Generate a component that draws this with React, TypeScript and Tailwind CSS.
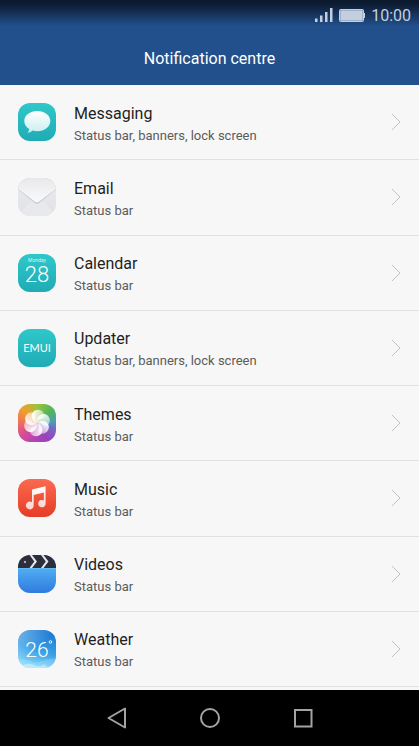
import type { ReactNode } from "react";

const tile = "block size-[38px] shrink-0";

function MessagingIcon() {
  return (
    <svg viewBox="0 0 38 38" className={tile} aria-hidden="true">
      <defs>
        <linearGradient id="msg-bg" x1="0" y1="0" x2="0" y2="1">
          <stop offset="0" stopColor="#2fc8ca" />
          <stop offset="1" stopColor="#1fabb5" />
        </linearGradient>
        <linearGradient id="msg-bubble" x1="0" y1="0" x2="0" y2="1">
          <stop offset="0" stopColor="#ffffff" />
          <stop offset="1" stopColor="#c9eef0" />
        </linearGradient>
      </defs>
      <rect width="38" height="38" rx="12" fill="url(#msg-bg)" />
      <path
        d="M19.300 8c7.400 0 13 4.400 13 10s-5.600 10.200-13 10.200c-1.700 0-3.200-.2-4.600-.6-1.300 1.200-3 2.100-5.200 2.200 1-1.200 1.600-2.400 1.700-3.800C8.100 24.200 6.300 21.300 6.300 18c0-5.600 5.600-10 13-10z"
        fill="url(#msg-bubble)"
      />
    </svg>
  );
}

function EmailIcon() {
  return (
    <svg viewBox="0 0 38 38" className={tile} aria-hidden="true">
      <defs>
        <linearGradient id="mail-flap" x1="0" y1="0" x2="0" y2="1">
          <stop offset="0" stopColor="#e8e8ea" />
          <stop offset="1" stopColor="#fafafc" />
        </linearGradient>
        <linearGradient id="mail-body" x1="0" y1="0" x2="0" y2="1">
          <stop offset="0" stopColor="#ececee" />
          <stop offset="1" stopColor="#e0e1e5" />
        </linearGradient>
        <clipPath id="mail-clip">
          <rect width="38" height="38" rx="12" />
        </clipPath>
      </defs>
      <g clipPath="url(#mail-clip)">
        <rect width="38" height="38" fill="url(#mail-body)" />
        <path d="M0 37L15 21h8l15 16v1H0z" fill="#e8e9ec" />
        <path d="M0 11.500l17 13.600q2 1.200 4 0L38 11.500V0H0z" fill="#c4c5ca" />
        <path d="M0 11l17 12.800q2 1.400 4 0L38 11V0H0z" fill="url(#mail-flap)" />
      </g>
    </svg>
  );
}

function CalendarIcon() {
  return (
    <svg viewBox="0 0 38 38" className={tile} aria-hidden="true">
      <rect width="38" height="38" rx="12" fill="url(#msg-bg)" />
      <text x="19" y="8" textAnchor="middle" fill="#d8f4f4" className="text-[5px]">
        Monday
      </text>
      <text x="19" y="28" textAnchor="middle" fill="#ffffff" className="text-[22px] font-light">
        28
      </text>
    </svg>
  );
}

function UpdaterIcon() {
  return (
    <svg viewBox="0 0 38 38" className={tile} aria-hidden="true">
      <rect width="38" height="38" rx="12" fill="url(#msg-bg)" />
      <text x="19" y="23" textAnchor="middle" fill="#ffffff" className="font-['Lato',sans-serif] text-[11px]">
        EMUI
      </text>
    </svg>
  );
}

function ThemesIcon() {
  return (
    <div className="size-[38px] shrink-0 rounded-[12px] bg-[conic-gradient(from_0deg,#9cc23c,#52b45c_50deg,#4a9fb4_85deg,#7668c4_110deg,#9a42bc_145deg,#b443b4_190deg,#d94f90_235deg,#ee7458_275deg,#efa02c_315deg,#9cc23c)]">
      <svg viewBox="0 0 38 38" className={tile} aria-hidden="true">
        <defs>
          <linearGradient id="petal" x1="0" y1="0" x2="1" y2="0">
            <stop offset="0" stopColor="#ffffff" stopOpacity="0.950" />
            <stop offset="1" stopColor="#ffffff" stopOpacity="0.450" />
          </linearGradient>
        </defs>
        {[10, 70, 130, 190, 250, 310].map((angle) => (
          <path
            key={angle}
            d="M19 19C13.500 18 10.800 12.500 13.200 8.800c2.200-3.600 7.600-4.200 10.400-1C26 10.800 24.500 14 21.500 14.600 19.800 15.500 19 17 19 19z"
            fill="url(#petal)"
            transform={`rotate(${angle} 19 19)`}
          />
        ))}
      </svg>
    </div>
  );
}

function MusicIcon() {
  return (
    <svg viewBox="0 0 38 38" className={tile} aria-hidden="true">
      <defs>
        <linearGradient id="music-bg" x1="0" y1="0" x2="0" y2="1">
          <stop offset="0" stopColor="#fb6a50" />
          <stop offset="1" stopColor="#e63c26" />
        </linearGradient>
        <linearGradient id="music-note" x1="0" y1="0" x2="0" y2="1">
          <stop offset="0" stopColor="#ffffff" />
          <stop offset="1" stopColor="#fbd3cc" />
        </linearGradient>
      </defs>
      <rect width="38" height="38" rx="12" fill="url(#music-bg)" />
      <path
        d="M14 10.500l13.600-3.300v17.300a3.700 3.700 0 1 1-1.700-3V13.400l-10.200 2.500v10.600a3.900 3.900 0 1 1-1.700-3.200z"
        fill="url(#music-note)"
      />
    </svg>
  );
}

function VideosIcon() {
  return (
    <svg viewBox="0 0 38 38" className={tile} aria-hidden="true">
      <defs>
        <linearGradient id="video-bg" x1="0" y1="0" x2="0" y2="1">
          <stop offset="0.300" stopColor="#54b0f2" />
          <stop offset="1" stopColor="#2f7be0" />
        </linearGradient>
        <clipPath id="video-clip">
          <rect width="38" height="38" rx="12" />
        </clipPath>
      </defs>
      <g clipPath="url(#video-clip)">
        <rect width="38" height="38" fill="url(#video-bg)" />
        <rect width="38" height="13" fill="#2d2e3a" />
        <path
          d="M11.500 0H14l5 6.500L14 13h-2.500l4.800-6.500zM23 0h2.500l5 6.500-5 6.500H23l4.800-6.500z"
          fill="#dfe6f0"
        />
        <circle cx="7" cy="7" r="1.200" fill="#a9abb8" />
        <path d="M0 13.500h38" stroke="#64bbf5" />
      </g>
    </svg>
  );
}

function WeatherIcon() {
  return (
    <svg viewBox="0 0 38 38" className={tile} aria-hidden="true">
      <defs>
        <linearGradient id="sky" x1="0.700" y1="0" x2="0.400" y2="1">
          <stop offset="0" stopColor="#1b78d2" />
          <stop offset="0.550" stopColor="#3ba1e6" />
          <stop offset="1" stopColor="#8fdcfb" />
        </linearGradient>
        <linearGradient id="glare" x1="0" y1="0" x2="0.500" y2="0.500">
          <stop offset="0" stopColor="#ffffff" stopOpacity="0.350" />
          <stop offset="1" stopColor="#ffffff" stopOpacity="0" />
        </linearGradient>
        <clipPath id="sky-clip">
          <rect width="38" height="38" rx="12" />
        </clipPath>
      </defs>
      <g clipPath="url(#sky-clip)">
        <rect width="38" height="38" fill="url(#sky)" />
        <rect width="38" height="38" fill="url(#glare)" />
        <path d="M0 30q7-2 12 1t12 0 14-2v10H0z" fill="#c4effd" opacity="0.250" />
        <path d="M4 36q6-4 12-1t10-1l6 5H4z" fill="#e4f9ff" opacity="0.450" />
      </g>
      <text x="19" y="27" textAnchor="middle" fill="#ffffff" className="text-[21px] font-light">
        26
      </text>
      <circle cx="32.500" cy="12" r="1.300" fill="none" stroke="#ffffff" strokeWidth="0.900" />
    </svg>
  );
}

interface AppEntry {
  name: string;
  detail: string;
  icon: ReactNode;
}

const apps: AppEntry[] = [
  { name: "Messaging", detail: "Status bar, banners, lock screen", icon: <MessagingIcon /> },
  { name: "Email", detail: "Status bar", icon: <EmailIcon /> },
  { name: "Calendar", detail: "Status bar", icon: <CalendarIcon /> },
  { name: "Updater", detail: "Status bar, banners, lock screen", icon: <UpdaterIcon /> },
  { name: "Themes", detail: "Status bar", icon: <ThemesIcon /> },
  { name: "Music", detail: "Status bar", icon: <MusicIcon /> },
  { name: "Videos", detail: "Status bar", icon: <VideosIcon /> },
  { name: "Weather", detail: "Status bar", icon: <WeatherIcon /> },
];

function StatusBar() {
  return (
    <div className="flex h-[30px] items-center justify-end gap-1.5 pr-2 text-[#c3cede]">
      <svg viewBox="0 0 18 14" className="h-3.5 w-[18px]" fill="currentColor" aria-hidden="true">
        <path d="M0 10.500h2.500V14H0zM5 7.500h2.500V14H5zM10 4h2.500v10H10zM15 0h2.500v14H15z" />
      </svg>
      <svg viewBox="0 0 26 13" className="h-[13px] w-[26px]" aria-hidden="true">
        <rect x="0.500" y="0.500" width="24" height="12" rx="1" fill="#7f93b2" stroke="currentColor" />
        <rect x="1.500" y="1.500" width="22" height="10" fill="currentColor" />
        <path d="M25 4h1v5h-1z" fill="currentColor" />
      </svg>
      <span className="pt-0.5 text-base leading-5">10:00</span>
    </div>
  );
}

function AppRow({ name, detail, icon }: AppEntry) {
  return (
    <li className="flex flex-1 border-b border-[#e1e1e1]">
      <button type="button" className="flex w-full items-center gap-[18px] px-[18px] text-left">
        {icon}
        <span className="flex flex-1 flex-col pt-[3px]">
          <span className="text-base leading-6 text-[#1f1f1f]">{name}</span>
          <span className="text-[13px] leading-5 text-[#5c5c5c]">{detail}</span>
        </span>
        <svg viewBox="0 0 10 18" className="h-[18px] w-2.5" fill="none" stroke="#c2c2c2" aria-hidden="true">
          <path d="M1 1l8 8-8 8" />
        </svg>
      </button>
    </li>
  );
}

function NavBar() {
  const button = "flex h-full w-[93px] items-center justify-center";
  return (
    <nav className="flex h-14 justify-center bg-black text-[#a3a3a3]">
      <button type="button" aria-label="Back" className={button}>
        <svg viewBox="0 0 22 22" className="size-[22px]" fill="none" stroke="currentColor" strokeWidth="2">
          <path d="M19 1.500v19L2.500 11z" strokeLinejoin="round" />
        </svg>
      </button>
      <button type="button" aria-label="Home" className={button}>
        <svg viewBox="0 0 22 22" className="size-[22px]" fill="none" stroke="currentColor" strokeWidth="2">
          <circle cx="11" cy="11" r="9" />
        </svg>
      </button>
      <button type="button" aria-label="Recent apps" className={button}>
        <svg viewBox="0 0 22 22" className="size-[22px]" fill="none" stroke="currentColor" strokeWidth="2">
          <rect x="3" y="3" width="16.500" height="16.500" />
        </svg>
      </button>
    </nav>
  );
}

export default function App() {
  return (
    <div className="flex min-h-screen flex-col bg-[#f7f7f7] font-['Roboto',sans-serif]">
      <header className="bg-[#21508c] bg-linear-to-b from-[#0c1a30] from-[3px] to-[#21508c] to-[26px]">
        <StatusBar />
        <h1 className="pt-[17px] pb-3.5 text-center text-base leading-6 text-white">Notification centre</h1>
      </header>
      <main className="flex flex-1 flex-col pb-[3px]">
        <ul className="flex flex-1 flex-col">
          {apps.map((app) => (
            <AppRow key={app.name} {...app} />
          ))}
        </ul>
      </main>
      <NavBar />
    </div>
  );
}
